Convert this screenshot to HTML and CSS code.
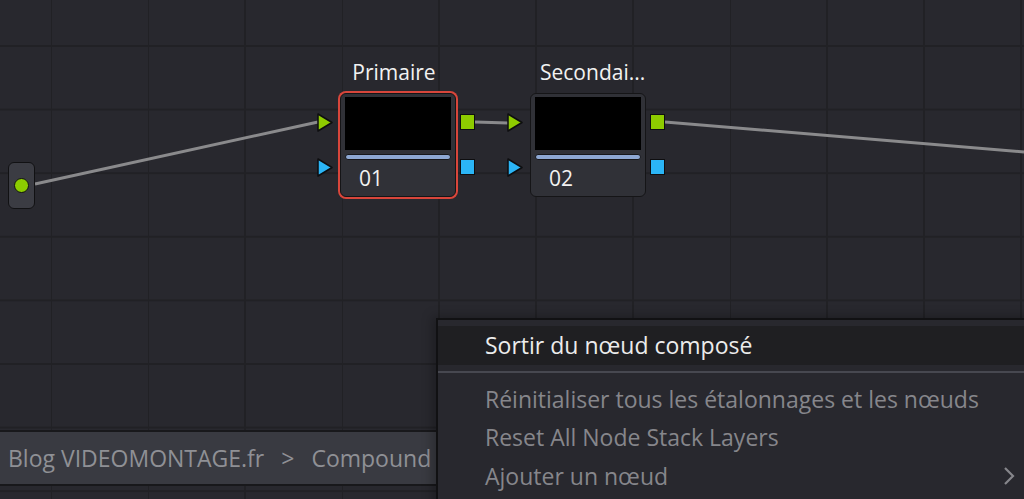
FILE: index.html
```html
<!DOCTYPE html>
<html lang="fr">

<head>
    <meta charset="UTF-8">
    <meta name="viewport" content="width=device-width, initial-scale=1.0">
    <title>Node Editor</title>
    <link rel="stylesheet" href="styles.css">
</head>

<body>
    <div class="canvas">
        <!-- connections between nodes -->
        <svg class="wires" width="1024" height="499">
            <line x1="35" y1="184" x2="318" y2="122" />
            <line x1="475" y1="122" x2="508" y2="123" />
            <line x1="665" y1="122" x2="1024" y2="152" />
        </svg>

        <div class="source">
            <span class="dot"></span>
        </div>

        <div class="node n1 selected">
            <div class="title">Primaire</div>
            <div class="body">
                <div class="preview"></div>
                <div class="bar"></div>
                <div class="label">01</div>
            </div>
            <svg class="port in-a" width="17" height="19"><polygon points="1,1 15,9.5 1,18" /></svg>
            <svg class="port in-b" width="17" height="19"><polygon points="1,1 15,9.5 1,18" /></svg>
            <span class="out out-a"></span>
            <span class="out out-b"></span>
        </div>

        <div class="node n2">
            <div class="title">Secondai...</div>
            <div class="body">
                <div class="preview"></div>
                <div class="bar"></div>
                <div class="label">02</div>
            </div>
            <svg class="port in-a" width="17" height="19"><polygon points="1,1 15,9.5 1,18" /></svg>
            <svg class="port in-b" width="17" height="19"><polygon points="1,1 15,9.5 1,18" /></svg>
            <span class="out out-a"></span>
            <span class="out out-b"></span>
        </div>

        <div class="crumbs">
            <span>Blog VIDEOMONTAGE.fr</span>
            <span class="sep">&gt;</span>
            <span>Compound</span>
        </div>

        <div class="menu">
            <div class="item active">Sortir du nœud composé</div>
            <div class="divider"></div>
            <div class="item">Réinitialiser tous les étalonnages et les nœuds</div>
            <div class="item">Reset All Node Stack Layers</div>
            <div class="item sub">Ajouter un nœud
                <svg class="chev" width="12" height="20"><polyline points="2,2 10,10 2,18" /></svg>
            </div>
        </div>
    </div>
</body>

</html>
```

FILE: styles.css
```css
body {
    margin: 0;
    background: #28282e;
    font-family: "Open Sans", "Noto Sans", sans-serif;
    overflow: hidden;
}

.canvas {
    position: relative;
    width: 1024px;
    height: 499px;
    overflow: hidden;
    background-color: #28282e;
    background-image:
        linear-gradient(to right, #212125 2px, transparent 2px),
        linear-gradient(to bottom, #212125 2px, transparent 2px);
    background-size: 97px 63.6px;
    background-position: 50px 45px;
}

.wires {
    position: absolute;
    left: 0;
    top: 0;
}

.wires line {
    stroke: #8a8a8c;
    stroke-width: 3;
}

.source {
    position: absolute;
    left: 8px;
    top: 162px;
    width: 25px;
    height: 45px;
    background: #3b3c43;
    border: 1px solid #111113;
    border-radius: 6px;
    display: flex;
    align-items: center;
    justify-content: center;
}

.dot {
    width: 13px;
    height: 13px;
    border-radius: 50%;
    background: #8ccc00;
    border: 1px solid #111;
}

/* nodes */
.node {
    position: absolute;
    width: 116px;
    height: 104px;
}

.n1 {
    left: 340px;
    top: 93px;
}

.n2 {
    left: 530px;
    top: 93px;
}

.body {
    box-sizing: border-box;
    width: 100%;
    height: 100%;
    background: #303137;
    border: 1px solid #151517;
    border-radius: 6px;
    padding: 3px 4px 0;
    display: flex;
    flex-direction: column;
}

.selected .body {
    box-shadow: 0 0 0 2px #d8463b;
}

.preview {
    height: 53px;
    background: #000;
}

.bar {
    margin-top: 4px;
    height: 4px;
    background: #8da7d2;
    border: 1px solid #17171a;
    border-radius: 3px;
}

.label {
    color: #f2f2f2;
    font-size: 21px;
    line-height: 24px;
    padding: 6px 0 0 14px;
}

.title {
    position: absolute;
    top: -34px;
    left: -28px;
    right: -20px;
    text-align: center;
    color: #f2f2f2;
    font-size: 21px;
    line-height: 26px;
}

.n2 .title {
    left: 10px;
    right: auto;
    text-align: left;
}

.port {
    position: absolute;
    left: -23px;
}

.port polygon {
    stroke: #0e0e10;
    stroke-width: 1.5;
    stroke-linejoin: round;
}

.in-a {
    top: 20px;
}

.in-a polygon {
    fill: #8ecb00;
}

.in-b {
    top: 65px;
}

.in-b polygon {
    fill: #2bb5f6;
}

.out {
    position: absolute;
    right: -19px;
    width: 13px;
    height: 14px;
    border: 1px solid #0e0e10;
}

.out-a {
    top: 21px;
    background: #8ecb00;
}

.out-b {
    top: 66px;
    background: #2bb5f6;
}

/* breadcrumb panel */
.crumbs {
    position: absolute;
    left: 0;
    top: 430px;
    width: 436px;
    height: 56px;
    box-sizing: border-box;
    background: #393a41;
    border-top: 2px solid #18181b;
    border-bottom: 2px solid #18181b;
    display: flex;
    align-items: center;
    gap: 17px;
    padding-left: 8px;
    color: #8f9095;
    font-size: 23px;
    white-space: nowrap;
    overflow: hidden;
}

.sep {
    color: #8f9095;
}

/* context menu */
.menu {
    position: absolute;
    left: 436px;
    top: 318px;
    width: 600px;
    height: 200px;
    background: #28282e;
    border-top: 2px solid #111113;
    border-left: 2px solid #111113;
    padding-top: 6px;
    box-shadow: -4px -2px 10px rgba(0, 0, 0, 0.25);
}

.item {
    height: 38.5px;
    line-height: 38px;
    padding-left: 47px;
    color: #86868b;
    font-size: 23px;
    position: relative;
}

.item.active {
    background: #1f1f22;
    color: #ececec;
}

.divider {
    margin: 6px 0 7px;
    height: 2px;
    background: #474850;
}

.chev {
    position: absolute;
    left: 565px;
    top: 9px;
}

.chev polyline {
    fill: none;
    stroke: #86868b;
    stroke-width: 2.2;
}
```
